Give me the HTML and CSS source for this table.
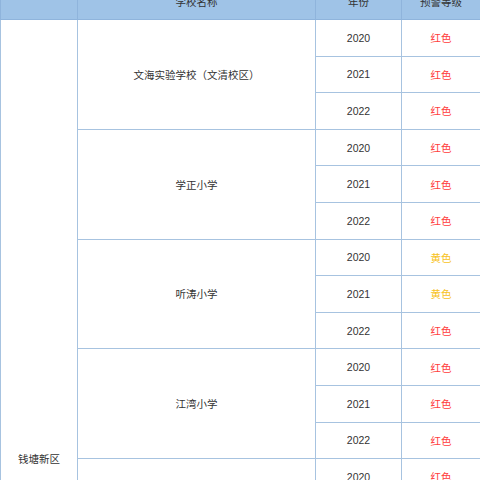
FILE: index.html
```html
<!DOCTYPE html>
<html lang="zh">
<head>
<meta charset="utf-8">
<link rel="stylesheet" href="styles.css">
</head>
<body>
<table class="grid">
  <colgroup>
    <col class="c-area"><col class="c-school"><col class="c-year"><col class="c-level">
  </colgroup>
  <thead>
    <tr class="head"><th></th><th>学校名称</th><th>年份</th><th>预警等级</th></tr>
  </thead>
  <tbody>
    <tr><td class="area" rowspan="24">钱塘新区</td><td rowspan="3">文海实验学校（文清校区）</td><td>2020</td><td class="red">红色</td></tr>
    <tr><td>2021</td><td class="red">红色</td></tr>
    <tr><td>2022</td><td class="red">红色</td></tr>
    <tr><td rowspan="3">学正小学</td><td>2020</td><td class="red">红色</td></tr>
    <tr><td>2021</td><td class="red">红色</td></tr>
    <tr><td>2022</td><td class="red">红色</td></tr>
    <tr><td rowspan="3">听涛小学</td><td>2020</td><td class="yellow">黄色</td></tr>
    <tr><td>2021</td><td class="yellow">黄色</td></tr>
    <tr><td>2022</td><td class="red">红色</td></tr>
    <tr><td rowspan="3">江湾小学</td><td>2020</td><td class="red">红色</td></tr>
    <tr><td>2021</td><td class="red">红色</td></tr>
    <tr><td>2022</td><td class="red">红色</td></tr>
    <tr><td rowspan="3">景苑小学</td><td>2020</td><td class="red">红色</td></tr>
    <tr><td>2021</td><td class="red">红色</td></tr>
    <tr><td>2022</td><td class="red">红色</td></tr>
    <tr><td rowspan="3">云帆小学</td><td>2020</td><td class="red">红色</td></tr>
    <tr><td>2021</td><td class="red">红色</td></tr>
    <tr><td>2022</td><td class="red">红色</td></tr>
    <tr><td rowspan="3">海达小学</td><td>2020</td><td class="red">红色</td></tr>
    <tr><td>2021</td><td class="red">红色</td></tr>
    <tr><td>2022</td><td class="red">红色</td></tr>
    <tr><td rowspan="3">下沙一小</td><td>2020</td><td class="red">红色</td></tr>
    <tr><td>2021</td><td class="red">红色</td></tr>
    <tr><td>2022</td><td class="red">红色</td></tr>
  </tbody>
</table>
</body>
</html>
```
FILE: styles.css
```css
html, body {
  margin: 0;
  padding: 0;
  overflow: hidden;
  background: #ffffff;
}
.grid {
  border-collapse: collapse;
  table-layout: fixed;
  width: 480px;
  margin-top: -18px;
  font-family: "Liberation Sans", "Noto Sans CJK SC", sans-serif;
  font-size: 10.5px;
  color: #333333;
}
.c-area { width: 77px; }
.c-school { width: 238px; }
.c-year { width: 86px; }
.c-level { width: 79px; }
.grid th, .grid td {
  border: 1px solid #a7c3e0;
  text-align: center;
  vertical-align: middle;
  padding: 0;
  font-weight: normal;
}
.head th {
  background: #9fc3e7;
  height: 36px;
  border-color: #8fb4dc;
}
.grid tbody tr {
  height: 36.6px;
}
.red { color: #ff3b3b; }
.yellow { color: #f7c21c; }
```
